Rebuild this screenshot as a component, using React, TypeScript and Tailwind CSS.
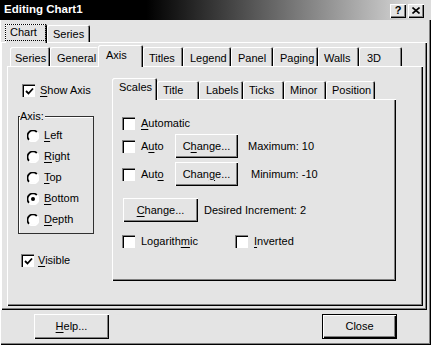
const raised =
  "bg-[#e4e4e4] shadow-[inset_1px_1px_#fff,inset_-1px_-1px_#000,inset_-2px_-2px_#808080]";

function Mn({ text, at }: { text: string; at: number }) {
  if (at < 0) return <>{text}</>;
  return (
    <>
      {text.slice(0, at)}
      <span className="underline underline-offset-[2px]">{text[at]}</span>
      {text.slice(at + 1)}
    </>
  );
}

function Check({ on = false }: { on?: boolean }) {
  return (
    <span className="flex h-[13px] w-[13px] shrink-0 items-center justify-center bg-white pl-px pt-px shadow-[inset_1px_1px_#808080,inset_2px_2px_#000,inset_-1px_-1px_#fff]">
      {on && (
        <svg width="9" height="9" viewBox="0 0 9 9">
          <path d="M1 4 L3.5 6.5 L8 1.5" fill="none" stroke="#000" strokeWidth="1.8" />
        </svg>
      )}
    </span>
  );
}

function Radio({ on = false }: { on?: boolean }) {
  return (
    <svg width="12" height="12" viewBox="0 0 12 12" className="shrink-0">
      <circle cx="6" cy="6" r="5" fill="#fff" />
      <path d="M9.89 2.11 A5.5 5.5 0 0 0 2.11 9.89" fill="none" stroke="#000" strokeWidth="1.7" />
      <path d="M2.11 9.89 A5.5 5.5 0 0 0 9.89 2.11" fill="none" stroke="#fff" strokeWidth="1.7" />
      {on && <circle cx="6" cy="6" r="2" fill="#000" />}
    </svg>
  );
}

type TabDef = { label: string; w: string; sel?: boolean; noRight?: boolean };

const innerTabs: TabDef[] = [
  { label: "Series", w: "w-[40px] pl-[5px]" },
  { label: "General", w: "w-[48px] pl-[7px]", noRight: true },
  { label: "Axis", w: "w-[45px] pl-[8px]", sel: true },
  { label: "Titles", w: "w-[40px] pl-[6px]" },
  { label: "Legend", w: "w-[48px] pl-[7px]" },
  { label: "Panel", w: "w-[42px] pl-[7px]" },
  { label: "Paging", w: "w-[45px] pl-[7px]" },
  { label: "Walls", w: "w-[41px] pl-[6px]" },
  { label: "3D", w: "w-[43px] pl-[8px]" },
];

const subTabs: TabDef[] = [
  { label: "Scales", w: "w-[45px] pl-[7px]", sel: true },
  { label: "Title", w: "w-[42px] pl-[6px]" },
  { label: "Labels", w: "w-[44px] pl-[7px]" },
  { label: "Ticks", w: "w-[41px] pl-[6px]" },
  { label: "Minor", w: "w-[42px] pl-[6px]" },
  { label: "Position", w: "w-[49px] pl-[6px]" },
];

function TabStrip({ tabs, selH, h, selPad, pad }: { tabs: TabDef[]; selH: string; h: string; selPad: string; pad: string }) {
  return (
    <>
      {tabs.map((t) => (
        <div
          key={t.label}
          className={`flex shrink-0 items-center rounded-t-[2px] bg-[#e4e4e4] ${t.w} ${
            t.sel ? `relative z-10 -mb-px ${selH} ${selPad}` : `${h} ${pad}`
          } ${
            t.noRight
              ? "shadow-[inset_1px_1px_#fff]"
              : "shadow-[inset_1px_1px_#fff,inset_-1px_0_#000,inset_-2px_0_#808080]"
          }`}
        >
          {t.label}
        </div>
      ))}
    </>
  );
}

const radios = [
  { t: "Left", on: false },
  { t: "Right", on: false },
  { t: "Top", on: false },
  { t: "Bottom", on: true },
  { t: "Depth", on: false },
];

export default function App() {
  return (
    <div className="flex h-[345px] w-[431px] flex-col overflow-hidden bg-[#e4e4e4] font-['Liberation_Sans',Arial,sans-serif] text-[11px] leading-none text-black shadow-[inset_1px_0_#fff,inset_-1px_-1px_#000,inset_-2px_-2px_#808080]">
      {/* title bar */}
      <div className="flex h-[20px] shrink-0 items-center bg-[linear-gradient(to_right,#000_34%,#dcdcdc_97%)]">
        <span className="pl-[4px] text-[11.5px] font-bold text-white">Editing Chart1</span>
        <div className="ml-auto mr-[7px] mt-px flex gap-[2px]">
          <div className={`flex h-[14px] w-[16px] items-center justify-center pb-px text-[11px] font-bold ${raised}`}>?</div>
          <div className={`flex h-[14px] w-[16px] items-center justify-center ${raised}`}>
            <svg width="8" height="7" viewBox="0 0 8 7">
              <path d="M0.5 0.5 L7.5 6.5 M7.5 0.5 L0.5 6.5" stroke="#000" strokeWidth="1.6" />
            </svg>
          </div>
        </div>
      </div>

      {/* outer tabs */}
      <div className="mt-[4px] flex h-[18px] items-end pl-[5px]">
        <div className="relative z-10 -mb-px flex h-[19px] w-[42px] rounded-t-[2px] bg-[#e4e4e4] p-px shadow-[inset_1px_1px_#fff,inset_-1px_0_#000,inset_-2px_0_#808080]">
          <span className="flex h-[15px] w-[39px] items-center pl-[4px] outline-1 outline-dotted outline-black">Chart</span>
        </div>
        <div className="flex h-[17px] w-[43px] items-center rounded-t-[2px] pl-[6px] pt-[2px] shadow-[inset_1px_1px_#fff,inset_-1px_0_#000,inset_-2px_0_#808080]">
          Series
        </div>
      </div>

      {/* outer panel */}
      <div className="ml-px flex h-[268px] w-[426px] flex-col pl-[6px] pt-[3px] shadow-[inset_1px_1px_#fff,inset_-1px_-1px_#000,inset_-2px_-2px_#808080]">
        <div className="ml-[3px] flex h-[21px] items-end">
          <TabStrip tabs={innerTabs} selH="h-[22px]" h="h-[19px]" selPad="pb-[1px]" pad="pt-[3px]" />
        </div>

        {/* inner panel */}
        <div className="flex h-[240px] w-[416px] shadow-[inset_1px_1px_#fff,inset_-1px_-1px_#000,inset_-2px_-2px_#808080]">
          {/* left column */}
          <div className="flex w-[105px] shrink-0 flex-col pl-[11px] pt-[18px]">
            <div className="ml-[4px] flex h-[13px] items-center gap-[5px]">
              <Check on />
              <span>
                <Mn text="Show Axis" at={0} />
              </span>
            </div>

            <div className="relative mt-[19px] flex h-[118px] w-[76px] flex-col gap-[8px] border border-[#303030] pl-[8px] pt-[12px] shadow-[inset_1px_1px_#fff]">
              <span className="absolute -top-[6px] left-[1px] bg-[#e4e4e4] pr-px">Axis:</span>
              {radios.map((r) => (
                <div key={r.t} className="flex h-[13px] items-center gap-[5px]">
                  <Radio on={r.on} />
                  <span>
                    <Mn text={r.t} at={0} />
                  </span>
                </div>
              ))}
            </div>

            <div className="ml-[3px] mt-[20px] flex h-[13px] items-center gap-[4px]">
              <Check on />
              <span>
                <Mn text="Visible" at={0} />
              </span>
            </div>
          </div>

          {/* right column */}
          <div className="flex flex-col pt-[12px]">
            <div className="flex h-[21px] items-end">
              <TabStrip tabs={subTabs} selH="h-[22px]" h="h-[18px]" selPad="pb-[3px]" pad="pt-0" />
            </div>
            <div className="flex h-[182px] w-[284px] flex-col pl-[10px] pt-[18px] shadow-[inset_1px_1px_#fff,inset_-1px_-1px_#000,inset_-2px_-2px_#808080]">
              <div className="flex h-[13px] items-center gap-[6px]">
                <Check />
                <span>
                  <Mn text="Automatic" at={0} />
                </span>
              </div>

              <div className="mt-[4px] flex h-[24px] items-center">
                <div className="flex w-[53px] items-center gap-[6px]">
                  <Check />
                  <span>
                    <Mn text="Auto" at={1} />
                  </span>
                </div>
                <div className={`flex h-[24px] w-[63px] items-center justify-center ${raised}`}>
                  <span>
                    <Mn text="Change..." at={1} />
                  </span>
                </div>
                <span className="ml-[10px]">Maximum: 10</span>
              </div>

              <div className="mt-[4px] flex h-[24px] items-center">
                <div className="flex w-[53px] items-center gap-[6px]">
                  <Check />
                  <span>
                    <Mn text="Auto" at={3} />
                  </span>
                </div>
                <div className={`flex h-[24px] w-[63px] items-center justify-center ${raised}`}>
                  <span>
                    <Mn text="Change..." at={4} />
                  </span>
                </div>
                <span className="ml-[13px]">Minimum: -10</span>
              </div>

              <div className="mt-[12px] flex h-[24px] items-center">
                <div className={`ml-px flex h-[24px] w-[75px] items-center justify-center ${raised}`}>
                  <span>
                    <Mn text="Change..." at={0} />
                  </span>
                </div>
                <span className="ml-[6px]">Desired Increment: 2</span>
              </div>

              <div className="mt-[13px] flex h-[13px] items-center">
                <div className="flex w-[113px] items-center gap-[6px]">
                  <Check />
                  <span>
                    <Mn text="Logarithmic" at={8} />
                  </span>
                </div>
                <div className="flex items-center gap-[6px]">
                  <Check />
                  <span>
                    <Mn text="Inverted" at={0} />
                  </span>
                </div>
              </div>
            </div>
          </div>
        </div>
      </div>

      {/* bottom buttons */}
      <div className="mt-[4px] flex justify-between px-[34px]">
        <div className={`flex h-[25px] w-[75px] items-center justify-center ${raised}`}>
          <span>
            <Mn text="Help..." at={0} />
          </span>
        </div>
        <div className="h-[25px] w-[75px] border border-black">
          <div className={`flex h-full w-full items-center justify-center ${raised}`}>Close</div>
        </div>
      </div>
    </div>
  );
}
